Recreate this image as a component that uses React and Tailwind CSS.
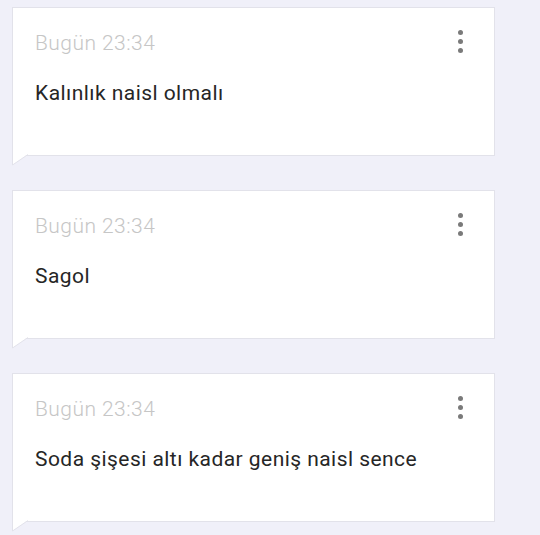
const MESSAGES = [
  { id: 1, time: 'Bugün 23:34', text: 'Kalınlık naisl olmalı' },
  { id: 2, time: 'Bugün 23:34', text: 'Sagol' },
  { id: 3, time: 'Bugün 23:34', text: 'Soda şişesi altı kadar geniş naisl sence' },
];

function MoreDots() {
  return (
    <div className="flex flex-col gap-[4px] pt-[1px]">
      <span className="block w-[5px] h-[5px] rounded-full bg-[#7a7a7a]" />
      <span className="block w-[5px] h-[5px] rounded-full bg-[#7a7a7a]" />
      <span className="block w-[5px] h-[5px] rounded-full bg-[#7a7a7a]" />
    </div>
  );
}

function Bubble({ time, text }) {
  return (
    <div className="relative bg-white border border-[#e2e2ea] h-[149px] pl-[22px] pr-[31px] pt-[21px]">
      {/* Header */}
      <div className="flex items-start justify-between">
        <div className="text-[21px] leading-[28px] tracking-[0.45px] font-light text-[#c6c6c6]">{time}</div>
        <MoreDots />
      </div>

      {/* Message */}
      <div className="mt-[22px] text-[21px] leading-[28px] tracking-[0.45px] text-[#262626]">{text}</div>

      {/* Tail */}
      <svg
        className="absolute left-[-1px] top-[calc(100%-1px)]"
        width="17"
        height="12"
        viewBox="0 0 17 12"
      >
        <polygon points="0.5,0 0.5,11 16,0" fill="#ffffff" />
        <polyline points="0.5,0 0.5,11 16,0.5" fill="none" stroke="#e2e2ea" strokeWidth="1" />
      </svg>
    </div>
  );
}

export default function App() {
  return (
    <div
      className="w-[540px] h-[535px] overflow-hidden bg-[#f0f0f9] pt-[7px] pl-[12px] pr-[45px]"
      style={{ fontFamily: 'Roboto, "Noto Sans", sans-serif' }}
    >
      <div className="flex flex-col gap-[34px]">
        {MESSAGES.map(m => (
          <Bubble key={m.id} time={m.time} text={m.text} />
        ))}
      </div>
    </div>
  );
}
